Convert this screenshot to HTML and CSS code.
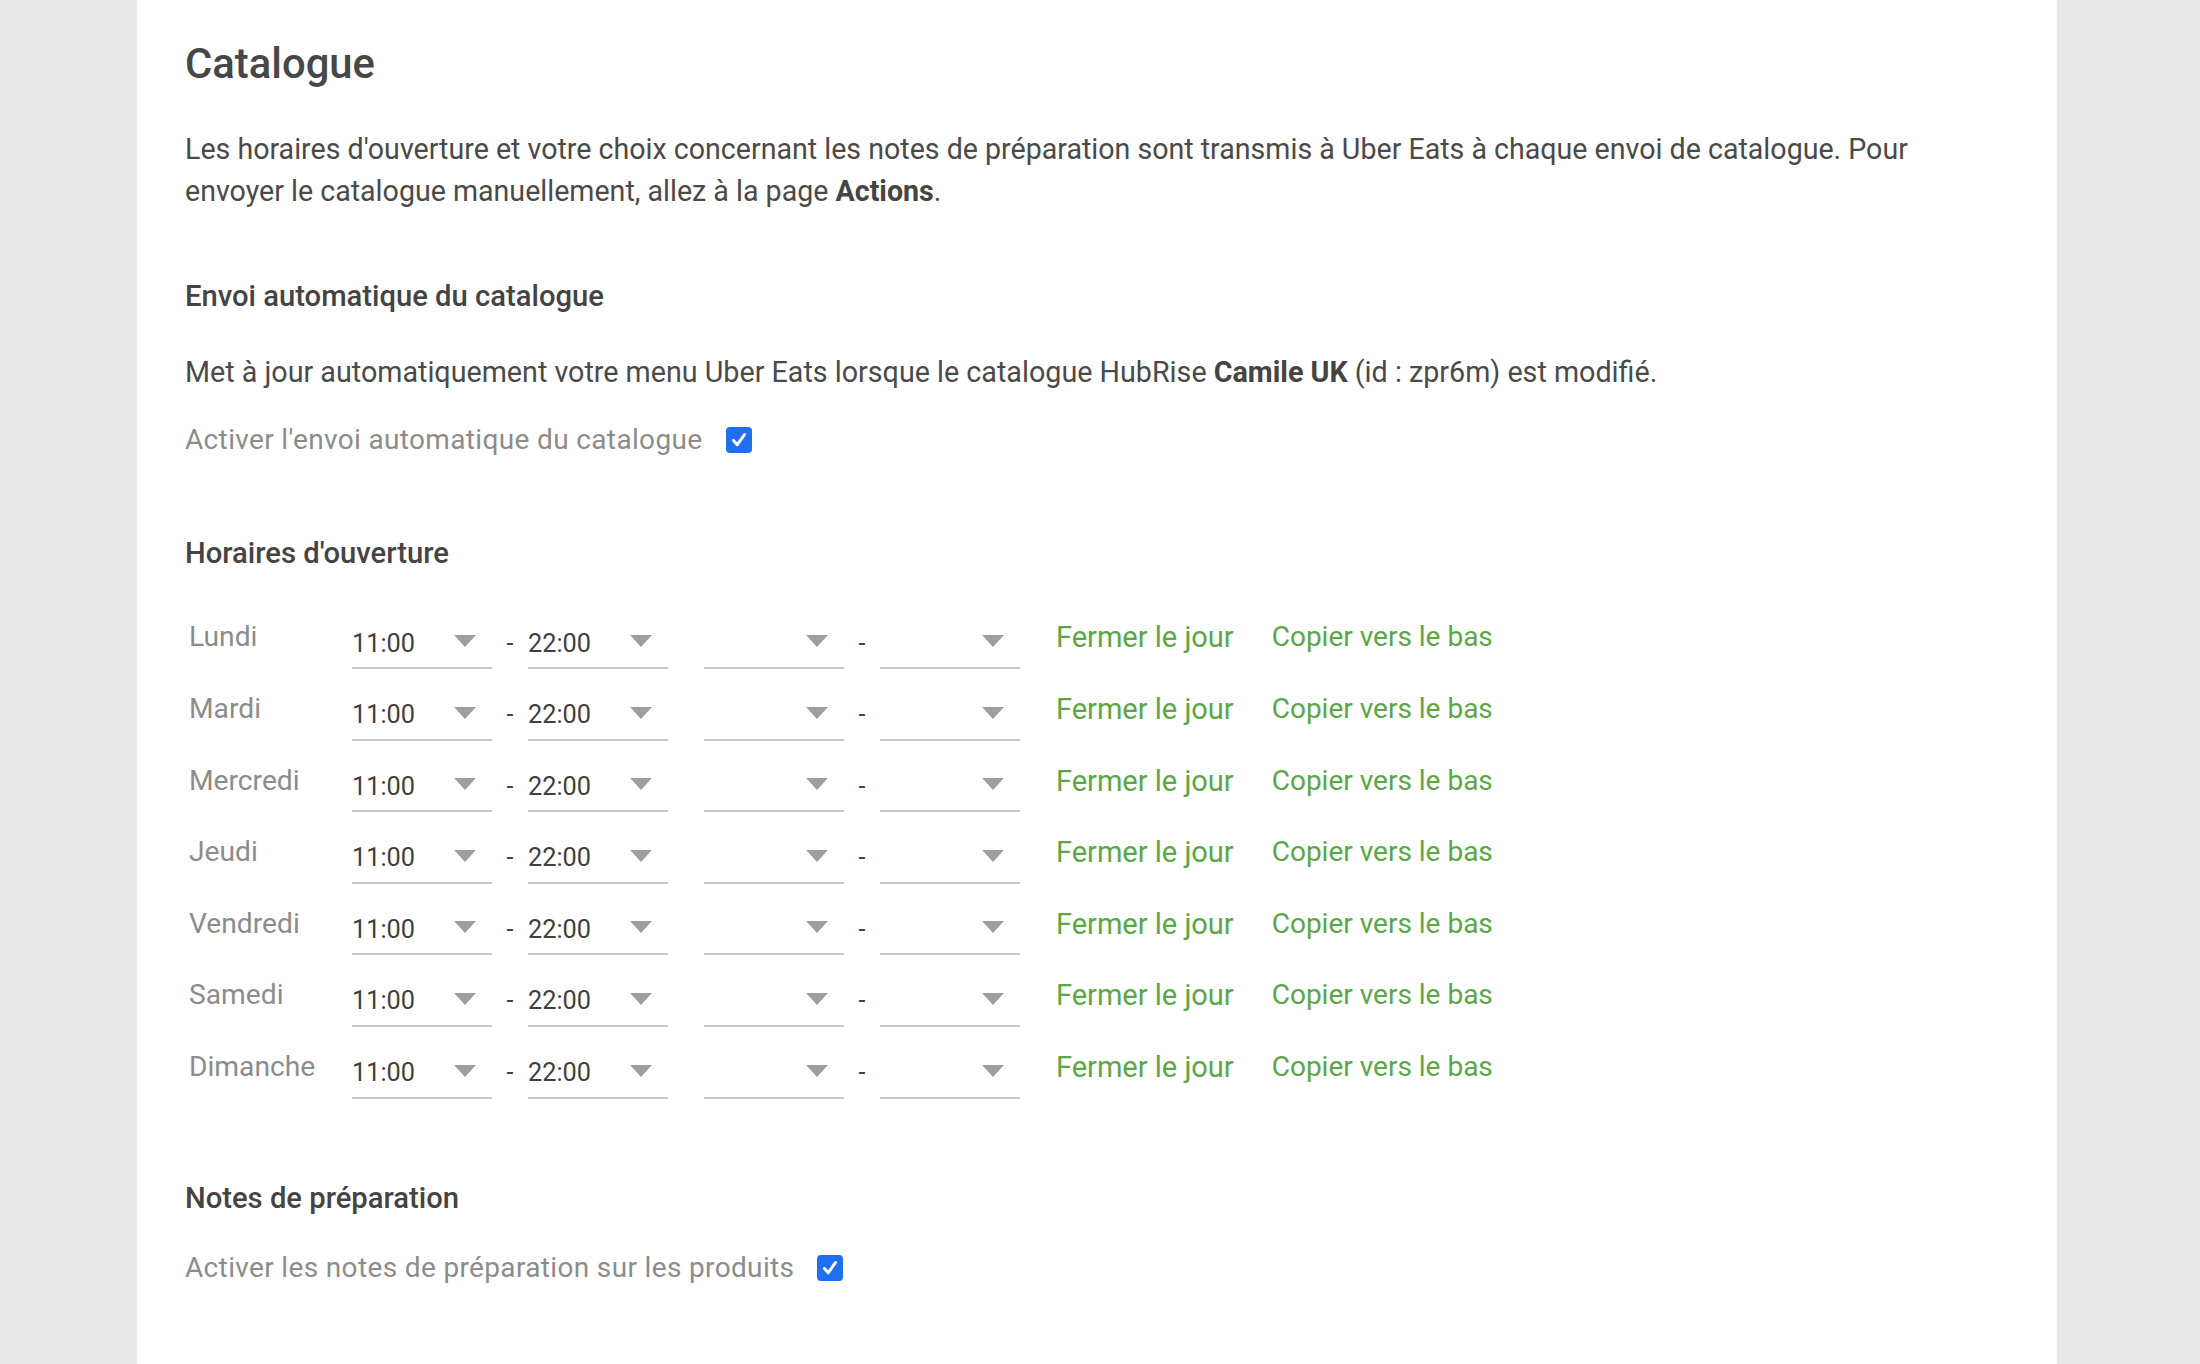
FILE: index.html
```html
<!DOCTYPE html>
<html lang="fr">
<head>
<meta charset="utf-8">
<title>Catalogue</title>
<link rel="stylesheet" href="styles.css">
</head>
<body>
<main class="card">
  <h1 class="title">Catalogue</h1>
  <p class="intro">Les horaires d'ouverture et votre choix concernant les notes de préparation sont transmis à Uber Eats à chaque envoi de catalogue. Pour envoyer le catalogue manuellement, allez à la page <strong>Actions</strong>.</p>

  <h2 class="section-title first">Envoi automatique du catalogue</h2>
  <p class="text">Met à jour automatiquement votre menu Uber Eats lorsque le catalogue HubRise <strong>Camile UK</strong> (id : zpr6m) est modifié.</p>
  <label class="check-row">
    <span class="check-label">Activer l'envoi automatique du catalogue</span>
    <span class="checkbox"><svg viewBox="0 0 26 26" width="26" height="26"><path d="M7.5 13.5 L11.2 17.8 L18.5 7.5" fill="none" stroke="#fff" stroke-width="3" stroke-linecap="round" stroke-linejoin="round"/></svg></span>
  </label>

  <h2 class="section-title hours-title">Horaires d'ouverture</h2>
  <div class="hours">
    <div class="day-row">
      <span class="day">Lundi</span>
      <div class="select"><span class="value">11:00</span><span class="arrow"></span></div>
      <span class="sep">-</span>
      <div class="select"><span class="value">22:00</span><span class="arrow"></span></div>
      <span class="sep"></span>
      <div class="select"><span class="value"></span><span class="arrow"></span></div>
      <span class="sep">-</span>
      <div class="select"><span class="value"></span><span class="arrow"></span></div>
      <a class="link close">Fermer le jour</a>
      <a class="link copy">Copier vers le bas</a>
    </div>
    <div class="day-row">
      <span class="day">Mardi</span>
      <div class="select"><span class="value">11:00</span><span class="arrow"></span></div>
      <span class="sep">-</span>
      <div class="select"><span class="value">22:00</span><span class="arrow"></span></div>
      <span class="sep"></span>
      <div class="select"><span class="value"></span><span class="arrow"></span></div>
      <span class="sep">-</span>
      <div class="select"><span class="value"></span><span class="arrow"></span></div>
      <a class="link close">Fermer le jour</a>
      <a class="link copy">Copier vers le bas</a>
    </div>
    <div class="day-row">
      <span class="day">Mercredi</span>
      <div class="select"><span class="value">11:00</span><span class="arrow"></span></div>
      <span class="sep">-</span>
      <div class="select"><span class="value">22:00</span><span class="arrow"></span></div>
      <span class="sep"></span>
      <div class="select"><span class="value"></span><span class="arrow"></span></div>
      <span class="sep">-</span>
      <div class="select"><span class="value"></span><span class="arrow"></span></div>
      <a class="link close">Fermer le jour</a>
      <a class="link copy">Copier vers le bas</a>
    </div>
    <div class="day-row">
      <span class="day">Jeudi</span>
      <div class="select"><span class="value">11:00</span><span class="arrow"></span></div>
      <span class="sep">-</span>
      <div class="select"><span class="value">22:00</span><span class="arrow"></span></div>
      <span class="sep"></span>
      <div class="select"><span class="value"></span><span class="arrow"></span></div>
      <span class="sep">-</span>
      <div class="select"><span class="value"></span><span class="arrow"></span></div>
      <a class="link close">Fermer le jour</a>
      <a class="link copy">Copier vers le bas</a>
    </div>
    <div class="day-row">
      <span class="day">Vendredi</span>
      <div class="select"><span class="value">11:00</span><span class="arrow"></span></div>
      <span class="sep">-</span>
      <div class="select"><span class="value">22:00</span><span class="arrow"></span></div>
      <span class="sep"></span>
      <div class="select"><span class="value"></span><span class="arrow"></span></div>
      <span class="sep">-</span>
      <div class="select"><span class="value"></span><span class="arrow"></span></div>
      <a class="link close">Fermer le jour</a>
      <a class="link copy">Copier vers le bas</a>
    </div>
    <div class="day-row">
      <span class="day">Samedi</span>
      <div class="select"><span class="value">11:00</span><span class="arrow"></span></div>
      <span class="sep">-</span>
      <div class="select"><span class="value">22:00</span><span class="arrow"></span></div>
      <span class="sep"></span>
      <div class="select"><span class="value"></span><span class="arrow"></span></div>
      <span class="sep">-</span>
      <div class="select"><span class="value"></span><span class="arrow"></span></div>
      <a class="link close">Fermer le jour</a>
      <a class="link copy">Copier vers le bas</a>
    </div>
    <div class="day-row">
      <span class="day">Dimanche</span>
      <div class="select"><span class="value">11:00</span><span class="arrow"></span></div>
      <span class="sep">-</span>
      <div class="select"><span class="value">22:00</span><span class="arrow"></span></div>
      <span class="sep"></span>
      <div class="select"><span class="value"></span><span class="arrow"></span></div>
      <span class="sep">-</span>
      <div class="select"><span class="value"></span><span class="arrow"></span></div>
      <a class="link close">Fermer le jour</a>
      <a class="link copy">Copier vers le bas</a>
    </div>
  </div>

  <h2 class="section-title notes-title">Notes de préparation</h2>
  <label class="check-row notes-row">
    <span class="check-label">Activer les notes de préparation sur les produits</span>
    <span class="checkbox"><svg viewBox="0 0 26 26" width="26" height="26"><path d="M7.5 13.5 L11.2 17.8 L18.5 7.5" fill="none" stroke="#fff" stroke-width="3" stroke-linecap="round" stroke-linejoin="round"/></svg></span>
  </label>
</main>
</body>
</html>
```
FILE: styles.css
```css
html, body {
  margin: 0;
  padding: 0;
}
body {
  background: #e9e9e9;
  font-family: Roboto, "Noto Sans", sans-serif;
  color: #4a4a4a;
  overflow: hidden;
}
.card {
  display: block;
  box-sizing: border-box;
  margin-left: 137px;
  width: 1920px;
  min-height: 1364px;
  background: #ffffff;
  padding: 40px 48px 40px 48px;
}
.title {
  margin: 0;
  font-size: 41.8px;
  line-height: 48px;
  font-weight: 500;
  color: #474747;
}
.intro {
  margin: 40px 0 0 0;
  max-width: 1760px;
  font-size: 28.6px;
  line-height: 42px;
}
.intro strong, .text strong {
  font-weight: 700;
  color: #444;
}
.section-title {
  margin: 0;
  font-size: 29.2px;
  line-height: 36px;
  font-weight: 500;
  color: #444444;
}
.section-title.first {
  margin-top: 66px;
}
.text {
  margin: 37px 0 0 0;
  font-size: 28.7px;
  line-height: 42px;
}
.check-row {
  display: flex;
  align-items: center;
  margin-top: 26px;
  height: 42px;
}
.check-label {
  font-size: 28px;
  line-height: 42px;
  letter-spacing: 0.35px;
  color: #8c8c8c;
}
.checkbox {
  display: inline-flex;
  width: 26px;
  height: 26px;
  margin-left: 23px;
  border-radius: 4px;
  background: #1f6ff3;
}
.hours-title {
  margin-top: 74px;
}
.hours {
  margin-top: 41px;
  display: grid;
  grid-auto-rows: 71.6px;
}
.day-row {
  display: flex;
  align-items: flex-start;
}
.day {
  width: 167px;
  padding-left: 4px;
  box-sizing: border-box;
  margin-top: 4.4px;
  font-size: 28.2px;
  line-height: 42px;
  color: #8c8c8c;
}
.select {
  box-sizing: border-box;
  width: 140px;
  height: 43.5px;
  margin-top: 13.5px;
  display: flex;
  align-items: flex-start;
  justify-content: space-between;
  padding-right: 16px;
  border-bottom: 2px solid #c7c7c7;
}
.value {
  font-size: 25.3px;
  line-height: 36px;
  color: #3f3f3f;
}
.arrow {
  width: 0;
  height: 0;
  margin-top: 9.5px;
  border-left: 11.5px solid transparent;
  border-right: 11.5px solid transparent;
  border-top: 12px solid #9e9e9e;
}
.sep {
  width: 36px;
  margin-top: 13.5px;
  text-align: center;
  font-size: 25px;
  line-height: 36px;
  color: #444444;
}
.link {
  margin-top: 4.4px;
  font-size: 28.5px;
  line-height: 42px;
  color: #5ba746;
  cursor: pointer;
}
.link.close {
  margin-left: 36px;
  font-size: 29px;
}
.link.copy {
  margin-left: 38px;
  font-size: 28px;
}
.notes-title {
  margin-top: 67px;
}
.notes-row {
  margin-top: 31px;
}
```
